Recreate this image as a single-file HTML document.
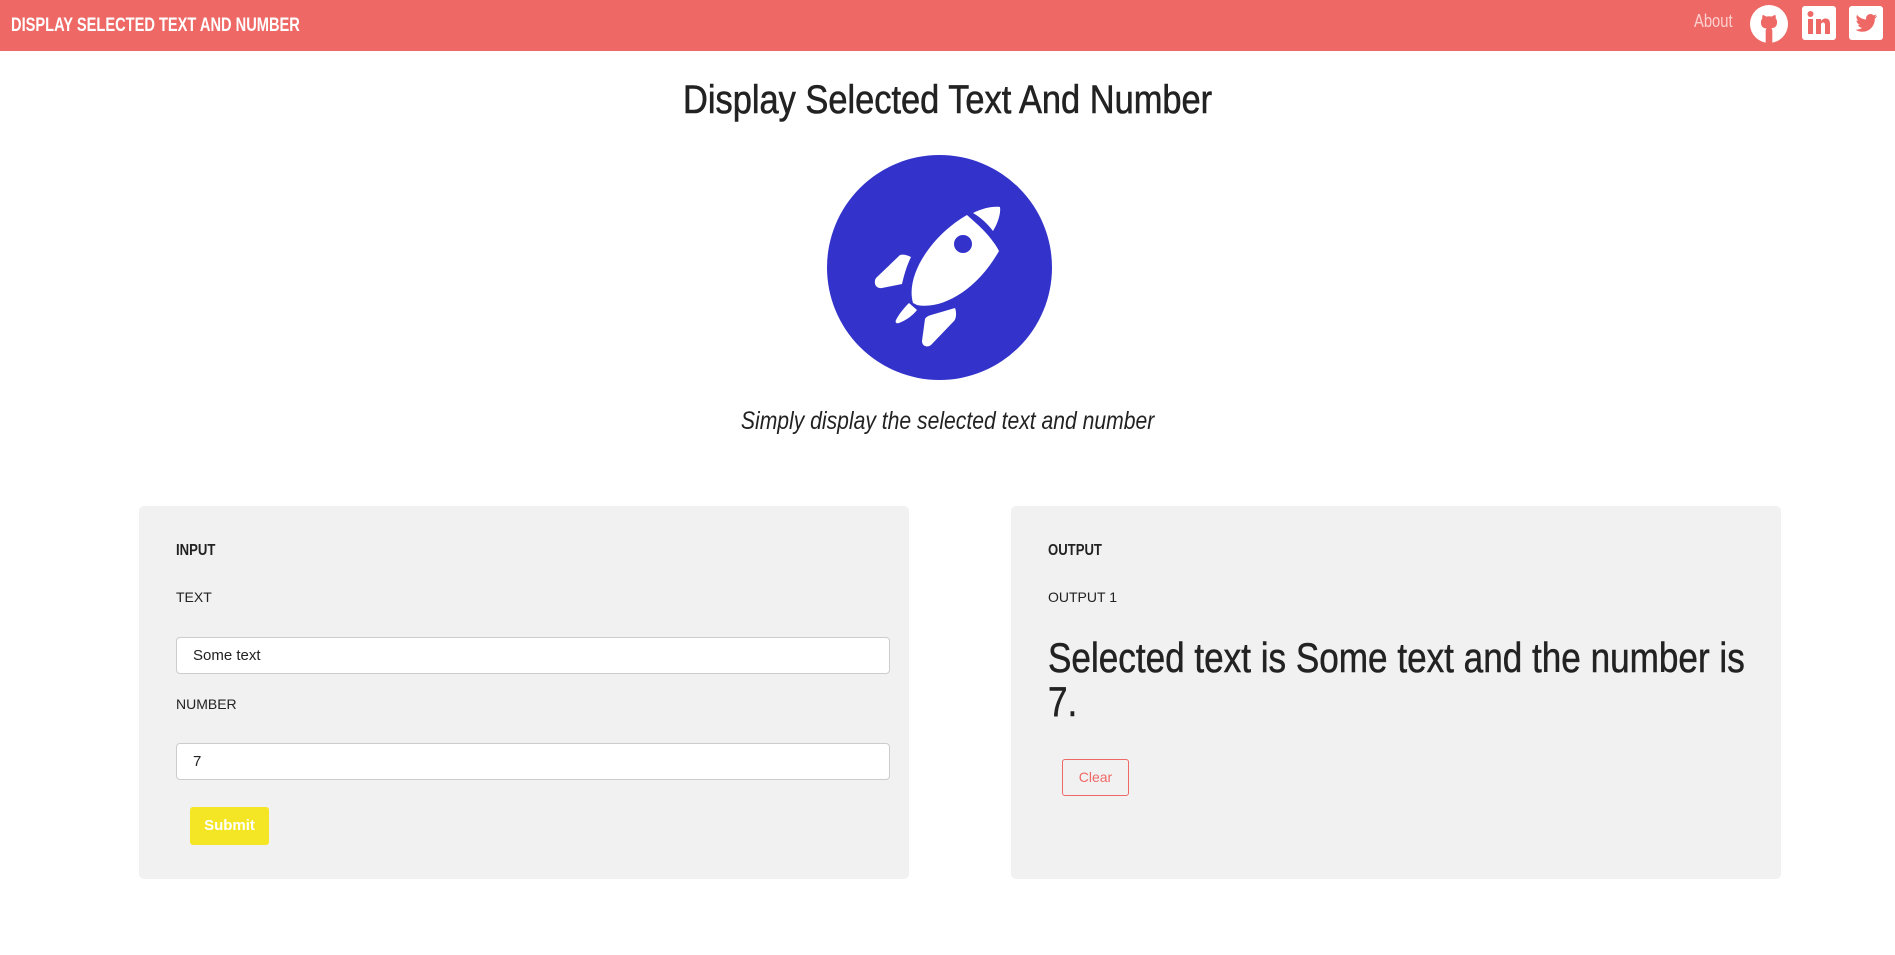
<!DOCTYPE html>
<html><head><meta charset="utf-8"><style>
*{margin:0;padding:0;box-sizing:border-box}
body{width:1895px;height:955px;background:#fff;font-family:"Liberation Sans",sans-serif;position:relative;overflow:hidden;color:#222}
.nav{position:absolute;left:0;top:0;width:1895px;height:51px;background:#ee6966}
.abs{position:absolute;white-space:nowrap}
.cond{transform-origin:left center;transform:scaleX(.82)}
.panel{position:absolute;top:506px;width:770px;height:373px;background:#f1f1f1;border-radius:5px}
.inp{position:absolute;left:37px;width:714px;height:37px;background:#fff;border:1px solid #ccc;border-radius:4px;font-size:15px;padding:9px 16px;color:#222}
.lbl{position:absolute;left:37px;font-size:15px;color:#222}
</style></head><body>
<div class="nav"></div>
<div class="abs" style="left:11px;top:15px;font-size:19px;font-weight:bold;color:#fff;transform-origin:left center;transform:scaleX(.77)">DISPLAY SELECTED TEXT AND NUMBER</div>
<div class="abs cond" style="left:1694px;top:11px;font-size:18px;color:#fbd0cf">About</div>
<svg class="abs" style="left:1750px;top:5px" width="38" height="38" viewBox="0 0 16 16"><circle cx="8" cy="8" r="8" fill="#fff"/><path fill="#ee6966" d="M5.3 4.2c.5 0 1.2.4 1.6.7.7-.2 1.5-.2 2.2 0 .4-.3 1.1-.7 1.6-.7.2.5.2 1 .1 1.4.4.5.6 1 .6 1.6 0 2-1.2 2.5-2.4 2.6.3.3.4.7.4 1.2V16H6.6v-4.9c0-.5.1-.9.4-1.2-1.2-.1-2.4-.6-2.4-2.6 0-.6.2-1.1.6-1.6-.1-.4-.1-.9.1-1.4z"/></svg>
<svg class="abs" style="left:1802px;top:6px" width="34" height="34" viewBox="0 0 34 34"><rect width="34" height="34" rx="3" fill="#fff"/><rect x="6" y="13" width="5" height="15" fill="#ee6966"/><circle cx="8.5" cy="8" r="3" fill="#ee6966"/><path fill="#ee6966" d="M14 13h5v2c1-1.5 2.5-2.5 4.5-2.5 3.5 0 4.5 2.3 4.5 5.5V28h-5v-9c0-1.5-.5-2.5-2-2.5S19 17.5 19 19v9h-5z"/></svg>
<svg class="abs" style="left:1849px;top:6px" width="34" height="34" viewBox="0 0 34 34"><rect width="34" height="34" rx="3" fill="#fff"/><path fill="#ee6966" d="M28 10c-.8.4-1.6.6-2.5.7.9-.5 1.6-1.4 1.9-2.4-.8.5-1.8.9-2.8 1.1-1.7-1.8-4.6-1.8-6.3 0-1.1 1.1-1.5 2.6-1.2 4.1-3.5-.2-6.8-1.9-9-4.6-1.2 2-.6 4.6 1.4 5.9-.7 0-1.4-.2-2-.5 0 2.1 1.5 3.9 3.5 4.3-.6.2-1.3.2-2 .1.6 1.8 2.3 3 4.1 3.1-1.8 1.4-4.1 2.1-6.5 1.9 2 1.3 4.3 2 6.7 2 8.1 0 12.5-6.7 12.5-12.5v-.6c.9-.6 1.6-1.4 2.2-2.3z"/></svg>
<div class="abs" style="left:0;width:1895px;top:78px;text-align:center"><span style="display:inline-block;font-size:40px;transform:scaleX(.86);color:#222;-webkit-text-stroke:.6px #222">Display Selected Text And Number</span></div>
<svg class="abs" style="left:827px;top:155px" width="225" height="225" viewBox="0 0 225 225">
<circle cx="112.5" cy="112.5" r="112.5" fill="#3333cc"/>
<g fill="#fff">
<path d="M86 148 C78 120 105 80 140 60 L150 69 C162 80 169 90 172 96 C150 135 115 155 90 150 Z"/>
<path d="M146 58 C156 53 166 51 173 52 C174 58 171 68 166 76 C160 68 153 62 146 58 Z"/>
<circle cx="136" cy="89" r="9" fill="#3333cc"/>
<path d="M49 123 L73 100 C76 99 80 100 84 102 C80 110 77 120 75 129 L55 133 C49 134 46 128 49 123 Z"/>
<path d="M104 160 L128 153 C130 158 129 164 127 166 L104 190 C100 193 95 191 95 186 L98 164 C99 162 101 161 104 160 Z"/>
<path d="M82 148 L90 155 C86 160 80 165 72 168 C69 169 68 167 69 165 C72 159 77 153 82 148 Z"/>
</g></svg>
<div class="abs" style="left:0;width:1895px;top:407px;text-align:center"><span style="display:inline-block;font-size:25px;font-style:italic;transform:scaleX(.845)">Simply display the selected text and number</span></div>

<div class="panel" style="left:139px">
<div class="lbl cond" style="top:36px;font-weight:bold;font-size:16px">INPUT</div>
<div class="lbl" style="top:83px;font-size:14px">TEXT</div>
<div class="inp" style="top:131px">Some text</div>
<div class="lbl" style="top:190px;font-size:14px">NUMBER</div>
<div class="inp" style="top:237px">7</div>
<div class="abs" style="left:51px;top:301px;width:79px;height:38px;background:#f4e625;border-radius:3px;color:#fff;font-weight:bold;font-size:15px;text-align:center;line-height:38px">Submit</div>
</div>
<div class="panel" style="left:1011px">
<div class="lbl cond" style="top:36px;font-weight:bold;font-size:16px">OUTPUT</div>
<div class="lbl" style="top:83px;font-size:14px">OUTPUT 1</div>
<div class="abs" style="left:37px;top:130px;width:860px;white-space:normal;font-size:42px;line-height:44px;transform-origin:left top;transform:scaleX(.836);color:#222;-webkit-text-stroke:.5px #222">Selected text is Some text and the number is<br>7.</div>
<div class="abs" style="left:51px;top:253px;width:67px;height:37px;border:1px solid #ee6966;border-radius:3px;color:#ee6966;font-size:14px;text-align:center;line-height:35px">Clear</div>
</div>
</body></html>
